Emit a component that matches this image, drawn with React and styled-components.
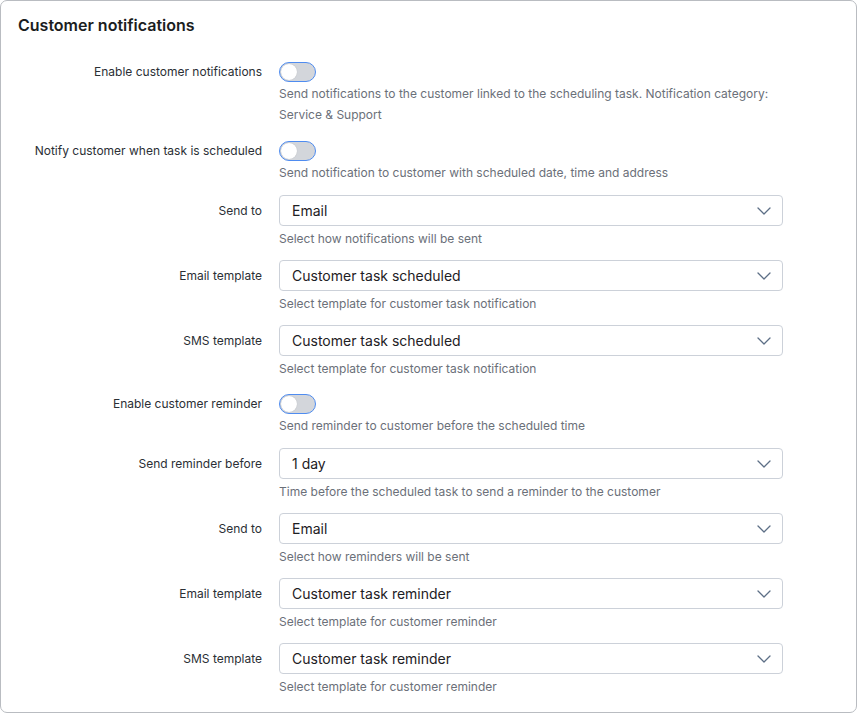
import { createGlobalStyle } from "styled-components";
import styled from "styled-components";

const GlobalStyle = createGlobalStyle`
  html, body {
    margin: 0;
    padding: 0;
    background: #ffffff;
  }
  body {
    font-family: "Inter", "Noto Sans", sans-serif;
    color: #1f2328;
  }
`;

const Card = styled.section`
  box-sizing: border-box;
  width: 857px;
  height: 713px;
  border: 1px solid #b9bcc1;
  border-radius: 7px;
  background: white;
  padding: 13px 18px 0 17px;
`;

const Title = styled.h2`
  margin: 0 0 22px 0;
  font-size: 16px;
  font-weight: 600;
  line-height: 22px;
  color: #1b1d21;
`;

const Form = styled.div`
  display: flex;
  flex-direction: column;
  row-gap: 11px;
`;

const Row = styled.div`
  display: grid;
  grid-template-columns: 244px 504px;
  column-gap: 17px;
  align-items: start;
  margin-top: ${(p) => (p.$toggle ? "4px" : "0")};
`;

const Label = styled.div`
  text-align: right;
  font-size: 12px;
  color: #2b2f35;
  line-height: ${(p) => (p.$toggle ? "20px" : "31px")};
  white-space: nowrap;
`;

const Field = styled.div`
  display: flex;
  flex-direction: column;
  row-gap: ${(p) => (p.$toggle ? "1px" : "2px")};
  padding-bottom: ${(p) => (p.$toggle ? "1px" : "0")};
`;

const ToggleWrap = styled.div`
  height: 20px;
  display: flex;
  align-items: center;
`;

const Toggle = styled.button`
  box-sizing: border-box;
  width: 37px;
  height: 20px;
  border-radius: 10px;
  border: 1.5px solid #4f8cf0;
  background: #d3d6db;
  padding: 0 0 0 1px;
  display: flex;
  align-items: center;
  justify-content: ${(p) => (p.$on ? "flex-end" : "flex-start")};
  cursor: pointer;
`;

const Knob = styled.span`
  width: 16px;
  height: 16px;
  border-radius: 50%;
  background: white;
  box-shadow: 0 0 1px rgba(0, 0, 0, 0.2);
`;

const Select = styled.div`
  box-sizing: border-box;
  height: 31px;
  border: 1px solid #ccd1d9;
  border-radius: 4px;
  display: flex;
  align-items: center;
  justify-content: space-between;
  padding: 0 11px 0 12px;
  font-size: 14px;
  color: #1d2024;
  background: white;
`;

const Help = styled.div`
  font-size: 12px;
  line-height: 21px;
  color: #6b7079;
`;

const Chevron = () => (
  <svg width="14" height="8" viewBox="0 0 14 8" fill="none">
    <path d="M1 1l6 6 6-6" stroke="#5d6f86" strokeWidth="1.3" strokeLinecap="round" strokeLinejoin="round" />
  </svg>
);

const rows = [
  {
    label: "Enable customer notifications",
    type: "toggle",
    help: "Send notifications to the customer linked to the scheduling task. Notification category: Service & Support",
  },
  {
    label: "Notify customer when task is scheduled",
    type: "toggle",
    help: "Send notification to customer with scheduled date, time and address",
  },
  { label: "Send to", type: "select", value: "Email", help: "Select how notifications will be sent" },
  {
    label: "Email template",
    type: "select",
    value: "Customer task scheduled",
    help: "Select template for customer task notification",
  },
  {
    label: "SMS template",
    type: "select",
    value: "Customer task scheduled",
    help: "Select template for customer task notification",
  },
  {
    label: "Enable customer reminder",
    type: "toggle",
    help: "Send reminder to customer before the scheduled time",
  },
  {
    label: "Send reminder before",
    type: "select",
    value: "1 day",
    help: "Time before the scheduled task to send a reminder to the customer",
  },
  { label: "Send to", type: "select", value: "Email", help: "Select how reminders will be sent" },
  {
    label: "Email template",
    type: "select",
    value: "Customer task reminder",
    help: "Select template for customer reminder",
  },
  {
    label: "SMS template",
    type: "select",
    value: "Customer task reminder",
    help: "Select template for customer reminder",
  },
];

const App = () => {
  return (
    <>
      <GlobalStyle />
      <Card>
        <Title>Customer notifications</Title>
        <Form>
          {rows.map((r, i) => {
            const isToggle = r.type === "toggle";
            return (
              <Row key={i} $toggle={isToggle}>
                <Label $toggle={isToggle}>{r.label}</Label>
                <Field $toggle={isToggle}>
                  {isToggle ? (
                    <ToggleWrap>
                      <Toggle $on={false}>
                        <Knob />
                      </Toggle>
                    </ToggleWrap>
                  ) : (
                    <Select>
                      <span>{r.value}</span>
                      <Chevron />
                    </Select>
                  )}
                  <Help>{r.help}</Help>
                </Field>
              </Row>
            );
          })}
        </Form>
      </Card>
    </>
  );
};

export default App;
